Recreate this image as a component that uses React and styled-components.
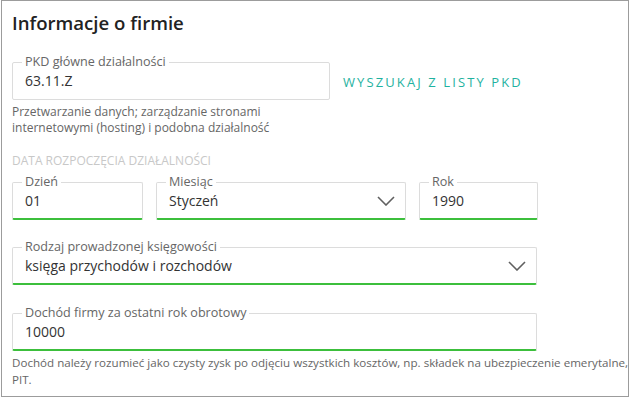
import React from "react";
import styled, { createGlobalStyle } from "styled-components";

const Global = createGlobalStyle`
  html, body { margin: 0; padding: 0; background: #fff; }
  body { font-family: "Open Sans", "Noto Sans", sans-serif; color: #333; }
`;

const Panel = styled.section`
  box-sizing: border-box;
  margin-left: 1px;
  width: 628px;
  height: 397px;
  border: 1px solid #9c9c9c;
  padding: 9px 0 0 10px;
  overflow: hidden;
`;

const Title = styled.h2`
  margin: 0;
  font-size: 18.6px;
  line-height: 26px;
  font-weight: 600;
  color: #222;
`;

const Row = styled.div`
  display: flex;
  align-items: center;
  gap: ${(p) => p.$gap || 12}px;
  margin-top: ${(p) => p.$mt || 0}px;
`;

const Box = styled.div`
  position: relative;
  box-sizing: border-box;
  width: ${(p) => p.$w}px;
  height: 38px;
  margin-top: ${(p) => p.$mt || 0}px;
  border: 1px solid #dcdcdc;
  border-bottom: ${(p) => (p.$ok ? "2px solid #3cbf3c" : "1px solid #dcdcdc")};
  border-radius: 2px;
  display: flex;
  align-items: center;
  justify-content: space-between;
  padding: 0 10px 0 12px;
  font-size: 14px;
  color: #333;
`;

const Label = styled.span`
  position: absolute;
  top: -9px;
  left: 9px;
  padding: 0 3px;
  background: #fff;
  font-size: 12.6px;
  line-height: 16px;
  color: #666;
  white-space: nowrap;
`;

const Value = styled.span`
  font-size: 14px;
  line-height: 18px;
  color: #333;
`;

const LinkButton = styled.a`
  font-size: 13px;
  letter-spacing: 2.1px;
  color: #1fb2a0;
  text-transform: uppercase;
  text-decoration: none;
  margin-top: 2px;
`;

const Help = styled.p`
  margin: ${(p) => p.$mt || 4}px -6px 0 0;
  font-size: ${(p) => p.$fs || 12}px;
  line-height: ${(p) => p.$lh || 16}px;
  color: #666;
  max-width: ${(p) => p.$mw || 640}px;
`;

const Section = styled.div`
  margin-top: 17px;
  font-size: 12px;
  line-height: 16px;
  color: #c8c8c8;
  text-transform: uppercase;
`;

const Chevron = () => (
  <svg width="18" height="10" viewBox="0 0 18 10" fill="none">
    <path d="M1 1 L9 9 L17 1" stroke="#606060" strokeWidth="1.6" />
  </svg>
);

export default function App() {
  return (
    <>
      <Global />
      <Panel>
        <Title>Informacje o firmie</Title>
        <Row $gap={13} $mt={26}>
          <Box $w={318}>
            <Label>PKD główne działalności</Label>
            <Value>63.11.Z</Value>
          </Box>
          <LinkButton href="#">Wyszukaj z listy PKD</LinkButton>
        </Row>
        <Help $mw={265}>
          Przetwarzanie danych; zarządzanie stronami internetowymi (hosting) i
          podobna działalność
        </Help>
        <Section>Data rozpoczęcia działalności</Section>
        <Row $gap={13} $mt={13}>
          <Box $w={131} $ok>
            <Label>Dzień</Label>
            <Value>01</Value>
          </Box>
          <Box $w={250} $ok>
            <Label>Miesiąc</Label>
            <Value>Styczeń</Value>
            <Chevron />
          </Box>
          <Box $w={119} $ok>
            <Label>Rok</Label>
            <Value>1990</Value>
          </Box>
        </Row>
        <Box $w={525} $mt={27} $ok>
          <Label>Rodzaj prowadzonej księgowości</Label>
          <Value>księga przychodów i rozchodów</Value>
          <Chevron />
        </Box>
        <Box $w={525} $mt={28} $ok>
          <Label>Dochód firmy za ostatni rok obrotowy</Label>
          <Value>10000</Value>
        </Box>
        <Help $mt={3} $lh={17} $fs={11.6}>
          Dochód należy rozumieć jako czysty zysk po odjęciu wszystkich kosztów,
          np. składek na ubezpieczenie emerytalne, PIT.
        </Help>
      </Panel>
    </>
  );
}
